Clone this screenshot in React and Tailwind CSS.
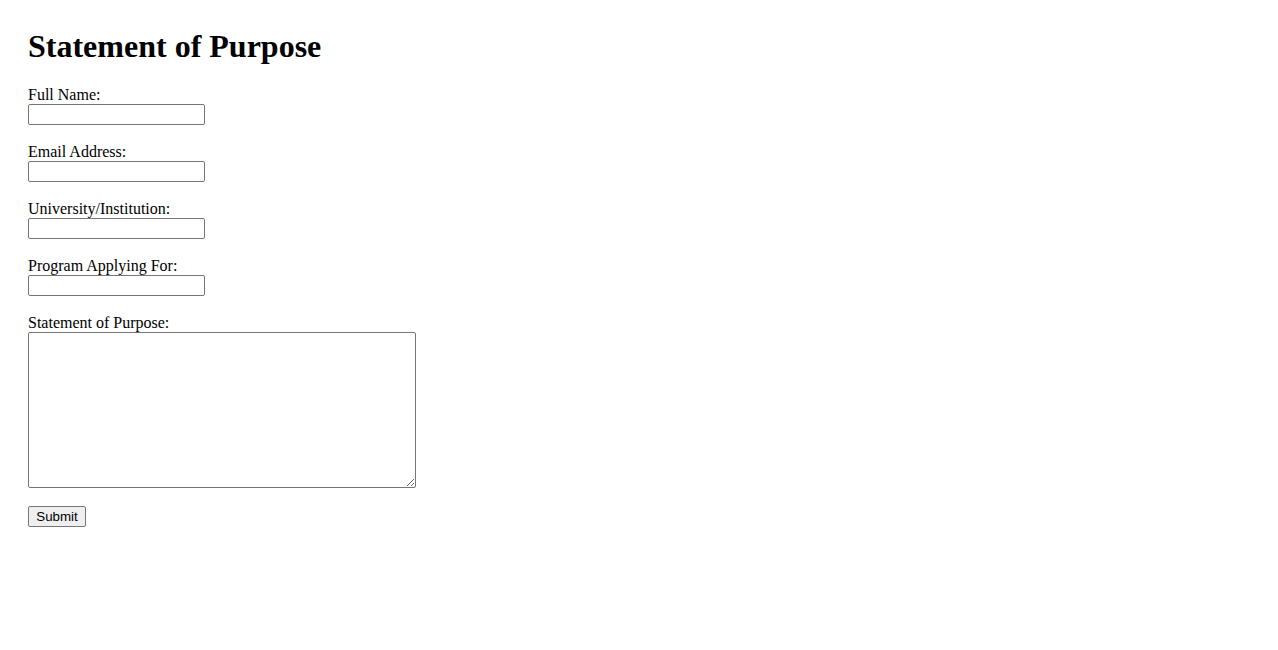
export default function App() {
  const fields = ['Full Name:', 'Email Address:', 'University/Institution:', 'Program Applying For:'];

  return (
    <div className="min-h-screen bg-white p-[28px] text-black font-['Liberation_Serif','Times_New_Roman',serif]">
      <h1 className="text-[32px] font-bold leading-[37px] mb-[21px]">Statement of Purpose</h1>

      <form className="flex flex-col items-start" onSubmit={(e) => e.preventDefault()}>
        {fields.map((label) => (
          <div key={label} className="flex flex-col items-start mb-[18px]">
            <label className="text-[16px] leading-[18px]">{label}</label>
            <input
              type="text"
              className="w-[177px] h-[21px] border border-[#767676] rounded-[2px] bg-white px-[2px] text-[13.33px] font-['Liberation_Sans',Arial,sans-serif]"
            />
          </div>
        ))}

        {/* 文本域 */}
        <div className="flex flex-col items-start mb-[18px]">
          <label className="text-[16px] leading-[18px]">Statement of Purpose:</label>
          <textarea className="w-[388px] h-[156px] border border-[#767676] rounded-[2px] bg-white p-[2px] text-[13.33px] font-['Liberation_Mono',monospace]" />
        </div>

        <button
          type="submit"
          className="w-[58px] h-[21px] bg-[#efefef] border border-[#767676] rounded-[2px] text-[13.33px] leading-none text-black font-['Liberation_Sans',Arial,sans-serif]"
        >
          Submit
        </button>
      </form>
    </div>
  );
}
